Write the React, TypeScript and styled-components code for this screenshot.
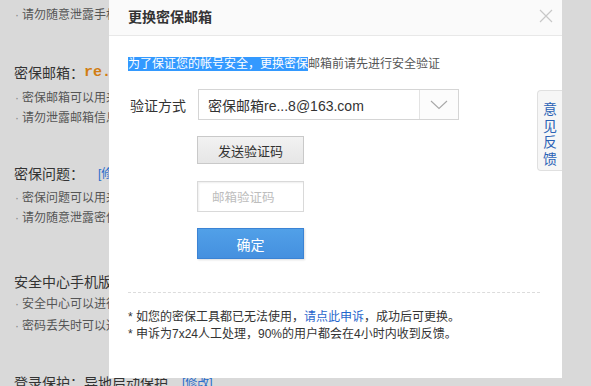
import React from "react";
import styled, { createGlobalStyle } from "styled-components";

const Global = createGlobalStyle`
  html, body { margin: 0; padding: 0; }
  body {
    width: 591px; height: 386px; overflow: hidden;
    font-family: "Liberation Sans", "Noto Sans CJK SC", sans-serif;
  }
`;

const Page = styled.div`
  position: relative;
  width: 591px;
  height: 386px;
  background: #d9d9d9;
  overflow: hidden;
`;

const Backdrop = styled.div`
  display: flex;
  flex-direction: column;
  padding: 5px 0 0 14px;
  color: #444;
`;

const Section = styled.div<{ $top: number }>`
  display: flex;
  flex-direction: column;
  margin-top: ${(p) => p.$top}px;
`;

const Heading = styled.div`
  font-size: 14px;
  line-height: 22px;
  color: #333;
  white-space: nowrap;
  display: flex;
  align-items: center;
`;

const Mono = styled.span`
  font-family: "Liberation Mono", monospace;
  font-weight: bold;
  font-size: 15px;
  color: #d17d12;
`;

const EditLink = styled.span<{ $gap: number }>`
  margin-left: ${(p) => p.$gap}px;
  font-size: 12px;
  color: #2a6dcc;
`;

const Bullet = styled.div<{ $top?: number }>`
  font-size: 12px;
  line-height: 20px;
  color: #555;
  white-space: nowrap;
  margin-top: ${(p) => p.$top ?? 0}px;
  &::before {
    content: "·";
    display: inline-block;
    width: 7px;
    margin-left: 1px;
    color: #888;
  }
`;

const Dialog = styled.div`
  position: absolute;
  left: 109px;
  top: 0;
  width: 453px;
  height: 378px;
  background: #fff;
  display: flex;
  flex-direction: column;
`;

const Header = styled.div`
  position: relative;
  height: 35px;
  background: #fafafa;
  border-bottom: 1px solid #e8e8e8;
  padding-left: 19px;
  font-size: 14px;
  font-weight: bold;
  line-height: 35px;
  color: #333;
`;

const Close = styled.svg`
  position: absolute;
  right: 9px;
  top: 9px;
`;

const Body = styled.div`
  display: flex;
  flex-direction: column;
  padding: 0 22px 0 19px;
`;

const Intro = styled.div`
  margin-top: 20px;
  font-size: 12px;
  line-height: 16px;
  color: #555;
  white-space: nowrap;
`;

const Selected = styled.span`
  background: #3399ff;
  color: #fff;
`;

const Row = styled.div`
  margin-top: 17px;
  display: flex;
  align-items: center;
  height: 31px;
`;

const Label = styled.div`
  width: 56px;
  margin: 0 12px 0 2px;
  font-size: 14px;
  color: #333;
  white-space: nowrap;
`;

const Select = styled.div`
  box-sizing: border-box;
  width: 261px;
  height: 31px;
  border: 1px solid #d5d5d5;
  display: flex;
  align-items: stretch;
`;

const SelectValue = styled.div`
  flex: 1;
  padding-left: 9px;
  display: flex;
  align-items: center;
  font-size: 14px;
  color: #333;
  white-space: nowrap;
`;

const SelectArrow = styled.div`
  width: 38px;
  border-left: 1px solid #e3e3e3;
  display: flex;
  align-items: center;
  justify-content: center;
  background: #fcfcfc;
`;

const Stack = styled.div`
  margin-left: 69px;
  display: flex;
  flex-direction: column;
  width: 107px;
`;

const GrayButton = styled.div`
  box-sizing: border-box;
  margin-top: 16px;
  height: 28px;
  border: 1px solid #c9c9c9;
  background: linear-gradient(#f2f2f2, #e6e6e6);
  display: flex;
  align-items: center;
  justify-content: center;
  font-size: 13px;
  color: #333;
`;

const CodeInput = styled.div`
  box-sizing: border-box;
  margin-top: 17px;
  height: 31px;
  border: 1px solid #d9d9d9;
  box-shadow: inset 1px 1px 2px #eee;
  display: flex;
  align-items: center;
  padding-left: 14px;
  font-size: 12.5px;
  color: #bdbdbd;
`;

const BlueButton = styled.div`
  box-sizing: border-box;
  margin-top: 16px;
  height: 31px;
  border: 1px solid #3b83d4;
  background: linear-gradient(#51a0e8, #4590df);
  box-shadow: 1px 1px 2px #ddd;
  display: flex;
  align-items: center;
  justify-content: center;
  font-size: 14px;
  color: #fff;
`;

const Dashed = styled.div`
  margin-top: 33px;
  border-top: 1px dashed #dcdcdc;
`;

const Notes = styled.div`
  margin-top: 16px;
  display: flex;
  flex-direction: column;
  font-size: 12px;
  line-height: 17px;
  color: #333;
  white-space: nowrap;
`;

const Link = styled.span`
  color: #1f66cc;
`;

const Feedback = styled.div`
  position: absolute;
  right: 0;
  top: 90px;
  box-sizing: border-box;
  width: 25px;
  height: 81px;
  background: #f6f6f6;
  border: 1px solid #e0e0e0;
  border-right: none;
  border-radius: 4px 0 0 4px;
  display: flex;
  flex-direction: column;
  align-items: center;
  padding-top: 10px;
  font-size: 14px;
  line-height: 16.5px;
  color: #2a62b5;
`;

export default function App() {
  return (
    <>
      <Global />
      <Page>
        <Backdrop>
          <Bullet>请勿随意泄露手机号码</Bullet>
          <Section $top={37}>
            <Heading>
              密保邮箱：<Mono>re...8@163.com</Mono>
            </Heading>
            <Bullet $top={4}>密保邮箱可以用来找回密码</Bullet>
            <Bullet>请勿泄露邮箱信息给他人</Bullet>
          </Section>
          <Section $top={35}>
            <Heading>
              密保问题：<EditLink $gap={14}>[修改]</EditLink>
            </Heading>
            <Bullet $top={3}>密保问题可以用来找回密码</Bullet>
            <Bullet>请勿随意泄露密保问题答案</Bullet>
          </Section>
          <Section $top={43}>
            <Heading>安全中心手机版</Heading>
            <Bullet $top={1}>安全中心可以进行账号保护</Bullet>
            <Bullet $top={2}>密码丢失时可以通过手机找回</Bullet>
          </Section>
          <Section $top={36}>
            <Heading>
              登录保护：异地启动保护<EditLink $gap={14}>[修改]</EditLink>
            </Heading>
          </Section>
        </Backdrop>

        <Dialog>
          <Header>
            更换密保邮箱
            <Close width="14" height="14" viewBox="0 0 14 14">
              <path d="M1 1L13 13M13 1L1 13" stroke="#c8c8c8" strokeWidth="1.2" fill="none" />
            </Close>
          </Header>
          <Body>
            <Intro>
              <Selected>为了保证您的帐号安全，更换密保</Selected>邮箱前请先进行安全验证
            </Intro>
            <Row>
              <Label>验证方式</Label>
              <Select>
                <SelectValue>密保邮箱re...8@163.com</SelectValue>
                <SelectArrow>
                  <svg width="18" height="10" viewBox="0 0 18 10">
                    <path d="M1 1L9 8.5L17 1" stroke="#a8a8a8" strokeWidth="1.1" fill="none" />
                  </svg>
                </SelectArrow>
              </Select>
            </Row>
            <Stack>
              <GrayButton>发送验证码</GrayButton>
              <CodeInput>邮箱验证码</CodeInput>
              <BlueButton>确定</BlueButton>
            </Stack>
            <Dashed />
            <Notes>
              <div>
                * 如您的密保工具都已无法使用，<Link>请点此申诉</Link>，成功后可更换。
              </div>
              <div>* 申诉为7x24人工处理，90%的用户都会在4小时内收到反馈。</div>
            </Notes>
          </Body>
          <Feedback>
            <span>意</span>
            <span>见</span>
            <span>反</span>
            <span>馈</span>
          </Feedback>
        </Dialog>
      </Page>
    </>
  );
}
